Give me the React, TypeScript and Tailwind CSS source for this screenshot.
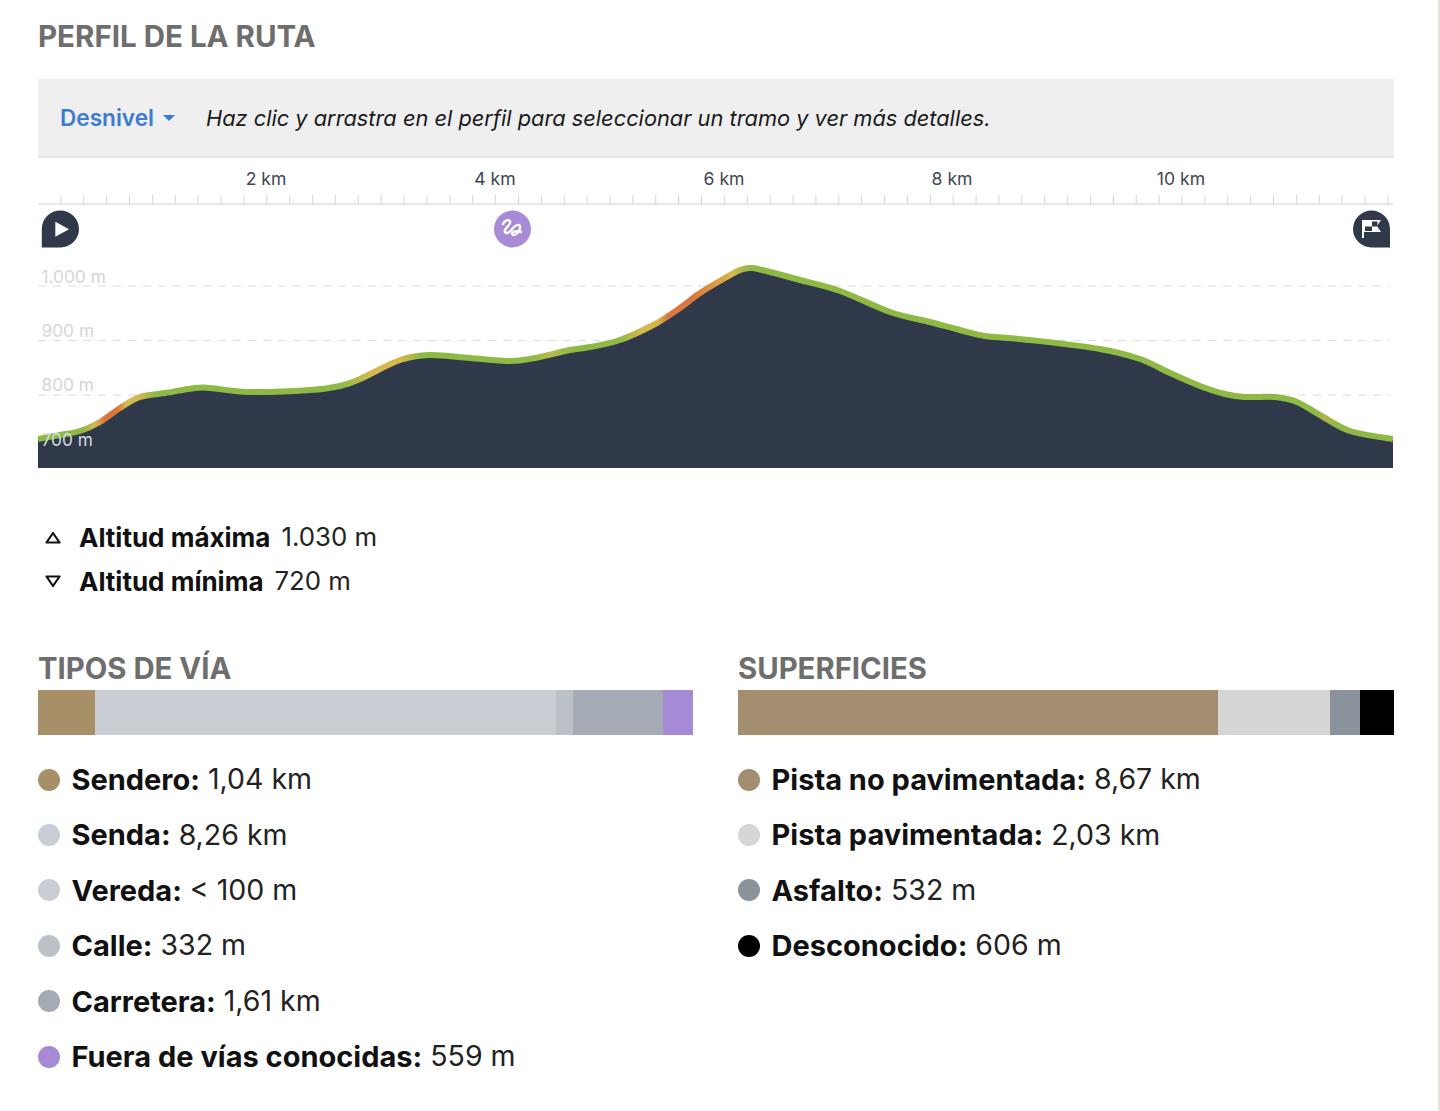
const PTS: [number, number][] = [
  [38, 439], [60, 435], [80, 431], [100, 422], [120, 408], [140, 397], [165, 393], [195, 388], [210, 388],
  [250, 392], [310, 390], [340, 386], [360, 379], [400, 360], [430, 355], [470, 358], [510, 361], [535, 358], [570, 350],
  [590, 347], [620, 340], [655, 324], [680, 308], [700, 293], [725, 278], [740, 270], [752, 268], [770, 272], [800, 280],
  [840, 291], [890, 312], [930, 322], [960, 330], [985, 336], [1030, 340], [1100, 349], [1140, 359], [1170, 373],
  [1200, 386], [1225, 394], [1245, 397], [1275, 397], [1297, 402], [1320, 415], [1350, 431], [1393, 439],
];

function smooth(pts: [number, number][]) {
  let d = `M${pts[0][0]} ${pts[0][1]}`;
  for (let i = 0; i < pts.length - 1; i++) {
    const p0 = pts[Math.max(i - 1, 0)];
    const p1 = pts[i];
    const p2 = pts[i + 1];
    const p3 = pts[Math.min(i + 2, pts.length - 1)];
    const c1x = p1[0] + (p2[0] - p0[0]) / 6;
    const c1y = p1[1] + (p2[1] - p0[1]) / 6;
    const c2x = p2[0] - (p3[0] - p1[0]) / 6;
    const c2y = p2[1] - (p3[1] - p1[1]) / 6;
    d += ` C${c1x.toFixed(1)} ${c1y.toFixed(1)} ${c2x.toFixed(1)} ${c2y.toFixed(1)} ${p2[0]} ${p2[1]}`;
  }
  return d;
}

const LINE = smooth(PTS);
const AREA = `${LINE} L1393 468 L38 468 Z`;
const W = 1355;
const GREEN = "#8fb945";
const YELLOW = "#d4b84e";
const ORANGE = "#d9773f";
const STOPS: [number, string][] = [
  [38, GREEN], [82, GREEN], [95, YELLOW], [105, ORANGE], [118, ORANGE], [126, YELLOW], [138, YELLOW], [155, GREEN],
  [340, GREEN], [372, YELLOW], [400, YELLOW], [420, GREEN], [530, GREEN], [550, "#b5bb4a"], [575, GREEN], [620, GREEN],
  [640, YELLOW], [658, YELLOW], [668, ORANGE], [692, ORANGE], [715, "#dd9a42"], [732, YELLOW], [750, GREEN], [1312, GREEN],
  [1325, "#aab548"], [1338, GREEN], [1393, GREEN],
];
const TICKS = Array.from({ length: 59 }, (_, i) => 38 + 22.88 * (i + 1));
const KM: [number, string][] = [[266, "2 km"], [495, "4 km"], [724, "6 km"], [952, "8 km"], [1181, "10 km"]];
const GRID: [number, string, number][] = [[286, "1.000 m", 277], [340.5, "900 m", 331], [395, "800 m", 385]];

const TIPOS = [
  { c: "bg-[#a78f68]", w: "w-[57px]", n: "Sendero:", v: "1,04 km" },
  { c: "bg-[#c9ced5]", w: "w-[461px]", n: "Senda:", v: "8,26 km" },
  { c: "bg-[#c9ced5]", w: "", n: "Vereda:", v: "< 100 m" },
  { c: "bg-[#bcc1c8]", w: "w-[17px]", n: "Calle:", v: "332 m" },
  { c: "bg-[#a4abb5]", w: "w-[90px]", n: "Carretera:", v: "1,61 km" },
  { c: "bg-[#a58ad6]", w: "w-[30px]", n: "Fuera de vías conocidas:", v: "559 m" },
];
const SUPERFICIES = [
  { c: "bg-[#a38f70]", w: "w-[480px]", n: "Pista no pavimentada:", v: "8,67 km" },
  { c: "bg-[#d6d6d6]", w: "w-[112px]", n: "Pista pavimentada:", v: "2,03 km" },
  { c: "bg-[#8a929c]", w: "w-[30px]", n: "Asfalto:", v: "532 m" },
  { c: "bg-black", w: "w-[34px]", n: "Desconocido:", v: "606 m" },
];

type Item = { c: string; w: string; n: string; v: string };

function Section({ title, items, width }: { title: string; items: Item[]; width: string }) {
  return (
    <div className={width}>
      <h2 className="h-[32px] text-[29.3px] leading-[32px] font-bold text-[#6e6e6e]">{title}</h2>
      <div className="mt-[5px] flex h-[45px]">
        {items.filter((i) => i.w).map((i) => (
          <div key={i.n} className={`${i.c} ${i.w} h-full`} />
        ))}
      </div>
      <ul className="mt-[17px]">
        {items.map((i) => (
          <li key={i.n} className="flex h-[55.4px] items-center text-[29px] text-[#222]">
            <span className={`${i.c} mr-[11.5px] h-[22px] w-[22px] shrink-0 rounded-full`} />
            <b className="font-bold text-[#111]">{i.n}</b>
            <span className="ml-[8px] text-[28.5px]">{i.v}</span>
          </li>
        ))}
      </ul>
    </div>
  );
}

function Stat({ up, name, value }: { up: boolean; name: string; value: string }) {
  return (
    <div className="flex h-[44px] items-center text-[26px]">
      <svg width="16" height="13" viewBox="0 0 16 13" className="ml-[7px] mr-[18px] shrink-0" fill="none" stroke="#111" strokeWidth="2.2">
        <path d={up ? "M8 2 L14.5 11.5 H1.5 Z" : "M8 11 L14.5 1.5 H1.5 Z"} strokeLinejoin="round" />
      </svg>
      <b className="font-bold text-[#111]">{name}</b>
      <span className="ml-[11px] text-[25.8px] text-[#222]">{value}</span>
    </div>
  );
}

export default function App() {
  return (
    <div className="h-[1111px] w-[1440px] overflow-hidden border-r-2 border-[#e2e2d6] bg-white font-['Inter',sans-serif]">
      <div className="pl-[38px] pr-[44px]">
        <h1 className="h-[79px] pt-[20px] text-[29.5px] leading-[32px] font-bold text-[#6e6e6e]">PERFIL DE LA RUTA</h1>

        <div className="flex h-[79px] items-center border-b-2 border-[#e6e6e6] bg-[#efefef] pb-px pl-[22px] pt-[2px]">
          <span className="text-[22.6px] font-semibold text-[#3a7bd5]">Desnivel</span>
          <svg width="12" height="6" viewBox="0 0 12 6" className="ml-[9px] mr-[31px]"><path d="M0 0 H12 L6 6 Z" fill="#3a7bd5" /></svg>
          <span className="text-[21.8px] italic text-[#1a1a1a]">Haz clic y arrastra en el perfil para seleccionar un tramo y ver más detalles.</span>
        </div>

        <svg width={W + 1} height="310" viewBox="38 158 1356 310" className="block font-['Inter',sans-serif]">
          <defs>
            <linearGradient id="slope" gradientUnits="userSpaceOnUse" x1="38" y1="0" x2="1393" y2="0">
              {STOPS.map(([x, c]) => (
                <stop key={x} offset={(x - 38) / W} stopColor={c} />
              ))}
            </linearGradient>
            <clipPath id="plot"><rect x="38" y="200" width={W} height="268" /></clipPath>
          </defs>

          {KM.map(([x, t]) => (
            <text key={t} x={x} y="185" textAnchor="middle" fontSize="17.6" fill="#3f4653">{t}</text>
          ))}
          <line x1="38" x2="1393" y1="204" y2="204" stroke="#dedfe2" strokeWidth="1.5" />
          {TICKS.map((x) => (
            <line key={x} x1={x} x2={x} y1="195" y2="204" stroke="#d4d5d9" strokeWidth="1" />
          ))}

          {GRID.map(([y, t, ty]) => (
            <g key={t}>
              <line x1="38" x2="1390" y1={y} y2={y} stroke="#dcdcdc" strokeWidth="1.2" strokeDasharray="8 7" />
              <text x="41.5" y={ty + 6} fontSize="17.3" fill="#d6d6d6">{t}</text>
            </g>
          ))}

          <path d={AREA} fill="#30394a" />
          <path d={LINE} fill="none" stroke="url(#slope)" strokeWidth="6" clipPath="url(#plot)" />
          <text x="41.5" y="446" fontSize="17.3" fill="#d9dbdf">700 m</text>

          {/* start pin */}
          <path d="M60.5 210.5 a18.5 18.5 0 0 1 0 37 H41.8 V229 a18.5 18.5 0 0 1 18.7 -18.5 Z" fill="#30394a" />
          <path d="M55.3 221.7 L69 229.2 L55.3 236.7 Z" fill="#fff" />

          {/* waypoint */}
          <circle cx="512.5" cy="229" r="18.5" fill="#a78bd6" />
          <path d="M503 224 C505 219 511 219 510 223 C509 227 503 229 505 232 C507 235 511 231 513 228 C515 225 519 224 520 226 C521 230 516 236 513 235 C510 233 514 230 521 232" fill="none" stroke="#fff" strokeWidth="2.4" strokeLinecap="round" strokeLinejoin="round" />

          {/* finish pin */}
          <path d="M1371.5 210.5 a18.5 18.5 0 0 0 0 37 H1390 V229 a18.5 18.5 0 0 0 -18.5 -18.5 Z" fill="#30394a" />
          <path d="M1363 220 V238" stroke="#fff" strokeWidth="2" fill="none" />
          <path d="M1362 220 H1381 L1377 226 L1381 232 H1362 Z" fill="#fff" />
          <rect x="1365" y="226.5" width="7" height="4.5" fill="#30394a" />
          <rect x="1372" y="221.5" width="5.5" height="5" fill="#30394a" />
        </svg>

        <div className="mt-[47px]">
          <Stat up name="Altitud máxima" value="1.030 m" />
          <Stat up={false} name="Altitud mínima" value="720 m" />
        </div>

        <div className="mt-[50px] flex gap-[45px]">
          <Section title="TIPOS DE VÍA" items={TIPOS} width="w-[655px]" />
          <Section title="SUPERFICIES" items={SUPERFICIES} width="w-[656px]" />
        </div>
      </div>
    </div>
  );
}
